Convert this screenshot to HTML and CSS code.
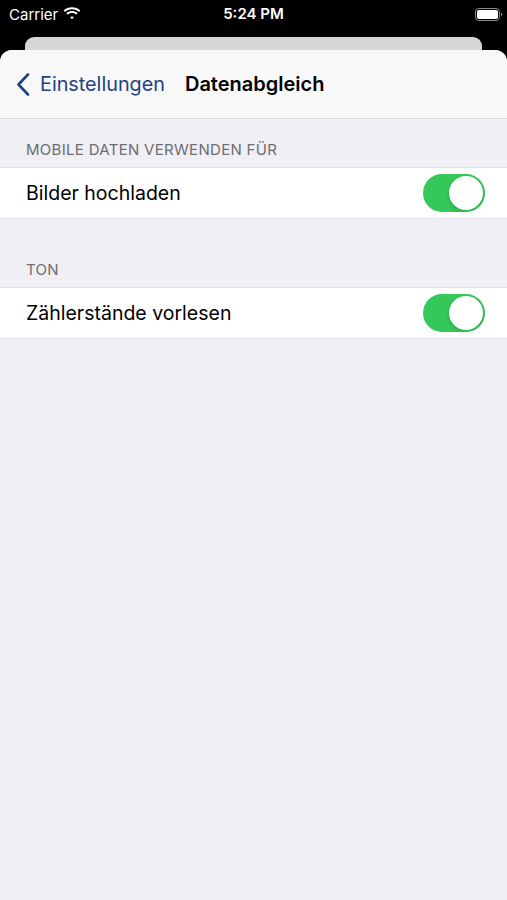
FILE: index.html
```html
<!DOCTYPE html>
<html lang="de">
<head>
    <meta charset="UTF-8">
    <meta name="viewport" content="width=device-width, initial-scale=1.0">
    <title>Datenabgleich</title>
    <link rel="stylesheet" href="styles.css">
</head>
<body>
    <div class="status-bar">
        <div class="status-left">
            <span>Carrier</span>
            <svg class="wifi" width="18" height="13" viewBox="0 0 18 13">
                <path d="M9 2.2c2.7 0 5.1 1 7 2.7l1.3-1.4C15.1 1.5 12.2 0.3 9 0.3S2.9 1.5 0.7 3.5L2 4.9c1.9-1.7 4.3-2.7 7-2.7z" fill="#fff"/>
                <path d="M9 5.9c1.7 0 3.2 0.6 4.4 1.6l1.3-1.4C13.2 4.8 11.2 4 9 4S4.8 4.8 3.3 6.1l1.3 1.4C5.8 6.5 7.3 5.9 9 5.9z" fill="#fff"/>
                <path d="M9 9.4c0.8 0 1.4 0.3 1.9 0.7L9 12.2 7.1 10.1C7.6 9.7 8.2 9.4 9 9.4z" fill="#fff"/>
            </svg>
        </div>
        <div class="status-time">5:24 PM</div>
        <div class="status-right">
            <svg width="28" height="13" viewBox="0 0 28 13">
                <rect x="0.5" y="0.5" width="24" height="12" rx="3.5" fill="none" stroke="#8a8a8a"/>
                <rect x="2" y="2" width="21" height="9" rx="2" fill="#fff"/>
                <path d="M26 4.5v4c0.8-0.3 1.3-1.1 1.3-2s-0.5-1.7-1.3-2z" fill="#8a8a8a"/>
            </svg>
        </div>
    </div>

    <div class="sheet-back"></div>

    <div class="sheet">
        <div class="navbar">
            <div class="back">
                <svg width="14" height="23" viewBox="0 0 14 23">
                    <path d="M12 1.5L2.5 11.5 12 21.5" fill="none" stroke="#1f4280" stroke-width="2.6" stroke-linecap="round" stroke-linejoin="round"/>
                </svg>
                <span>Einstellungen</span>
            </div>
            <div class="title">Datenabgleich</div>
        </div>

        <div class="section-header">MOBILE DATEN VERWENDEN FÜR</div>
        <div class="group">
            <div class="row">
                <span>Bilder hochladen</span>
                <div class="toggle"><div class="knob"></div></div>
            </div>
        </div>

        <div class="section-header spaced">TON</div>
        <div class="group">
            <div class="row">
                <span>Zählerstände vorlesen</span>
                <div class="toggle"><div class="knob"></div></div>
            </div>
        </div>
    </div>
</body>
</html>
```

FILE: styles.css
```css
body {
    margin: 0;
    background-color: #000;
    font-family: Inter, "Noto Sans", sans-serif;
}
.status-bar {
    height: 37px;
    display: flex;
    align-items: flex-start;
    justify-content: space-between;
    color: #fff;
    font-size: 15px;
    padding: 4px 4px 0 9px;
    box-sizing: border-box;
    position: relative;
}
.status-left {
    display: flex;
    align-items: center;
    gap: 5px;
    height: 20px;
}
.wifi {
    margin-top: -2px;
}
.status-time {
    position: absolute;
    left: 0;
    right: 0;
    top: 4px;
    text-align: center;
    font-weight: 600;
    height: 20px;
    line-height: 20px;
}
.status-right {
    display: flex;
    align-items: center;
    height: 20px;
}
.sheet-back {
    margin: 0 25px;
    height: 13px;
    background-color: #d6d6d8;
    border-radius: 9px 9px 0 0;
}
.sheet {
    background-color: #efeff4;
    border-radius: 12px 12px 0 0;
    overflow: hidden;
    min-height: 850px;
}
.navbar {
    height: 69px;
    background-color: #f8f8f9;
    border-bottom: 1px solid #dcdcde;
    display: flex;
    align-items: center;
    padding-left: 16px;
    box-sizing: border-box;
}
.back {
    display: flex;
    align-items: center;
    gap: 10px;
    color: #1f4280;
    font-size: 19.8px;
}
.title {
    margin-left: 20px;
    font-size: 20px;
    font-weight: 600;
    color: #000;
}
.section-header {
    padding: 22px 26px 8px;
    font-size: 15px;
    letter-spacing: 0.3px;
    color: #6d6d72;
    line-height: 18px;
}
.section-header.spaced {
    padding-top: 42px;
}
.group {
    background-color: #fff;
    border-top: 1px solid #e2e2e6;
    border-bottom: 1px solid #e2e2e6;
}
.row {
    height: 50px;
    display: flex;
    align-items: center;
    justify-content: space-between;
    padding: 0 22px 0 26px;
    font-size: 19.5px;
    color: #000;
}
.toggle {
    width: 62px;
    height: 38px;
    border-radius: 19px;
    background-color: #34c759;
    position: relative;
}
.knob {
    position: absolute;
    right: 2px;
    top: 2px;
    width: 34px;
    height: 34px;
    border-radius: 50%;
    background-color: #fff;
    box-shadow: 0 2px 4px rgba(0, 0, 0, 0.15);
}
```
